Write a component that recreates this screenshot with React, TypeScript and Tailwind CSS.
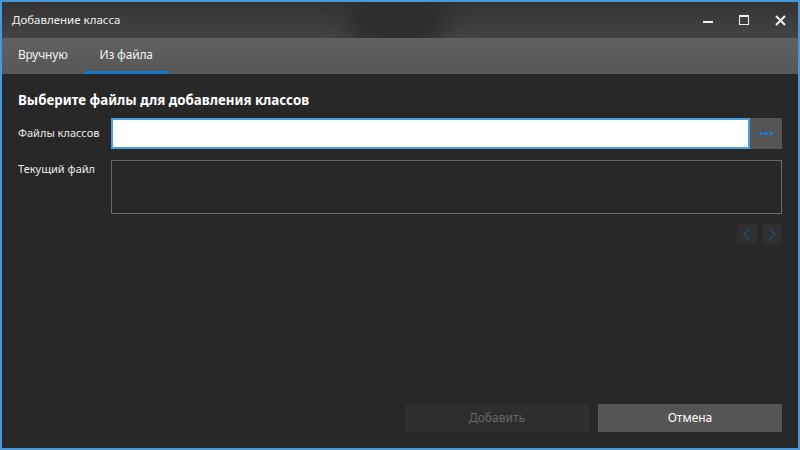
import { useState } from 'react';

export default function App() {
  const [tab, setTab] = useState<'manual' | 'file'>('file');

  return (
    <div
      className="w-[800px] h-[450px] bg-[#4a98d8] p-[2px] overflow-hidden"
      style={{ fontFamily: '"Segoe UI", "Noto Sans", "Open Sans", sans-serif' }}
    >
      <div className="flex flex-col h-full bg-[#282828]">
        {/* title bar */}
        <div className="relative flex items-center h-[36px] shrink-0 bg-gradient-to-b from-[#343434] to-[#444444] overflow-hidden">
          <div className="absolute left-[345px] top-[-10px] w-[100px] h-[56px] rounded-full bg-[#2c2c2c] blur-[12px]" />
          <span className="relative pl-[10px] text-[11.5px] text-[#f0f0f0]">Добавление класса</span>
          <div className="relative ml-auto flex items-center h-full">
            <button className="w-[36px] h-full flex items-center justify-center">
              <svg width="10" height="10" viewBox="0 0 10 10">
                <rect x="0" y="6" width="10" height="2" fill="#f0f0f0" />
              </svg>
            </button>
            <button className="w-[36px] h-full flex items-center justify-center">
              <svg width="10" height="10" viewBox="0 0 10 10">
                <rect x="0.5" y="0.5" width="9" height="9" fill="none" stroke="#f0f0f0" strokeWidth="1" />
                <rect x="0" y="0" width="10" height="2" fill="#f0f0f0" />
              </svg>
            </button>
            <button className="w-[36px] h-full flex items-center justify-center">
              <svg width="11" height="11" viewBox="0 0 11 11">
                <path d="M1 1 L10 10 M10 1 L1 10" stroke="#f0f0f0" strokeWidth="2" />
              </svg>
            </button>
          </div>
        </div>

        {/* tabs */}
        <div className="flex h-[36px] shrink-0 bg-gradient-to-b from-[#616161] to-[#575757] text-[12px] tracking-[-0.2px] text-[#f2f2f2]">
          <button
            onClick={() => setTab('manual')}
            className={`px-[16px] h-full border-b-[3px] ${tab === 'manual' ? 'border-[#1778c8]' : 'border-transparent'}`}
          >
            Вручную
          </button>
          <button
            onClick={() => setTab('file')}
            className={`px-[16px] h-full border-b-[3px] ${tab === 'file' ? 'border-[#1778c8]' : 'border-transparent'}`}
          >
            Из файла
          </button>
        </div>

        {/* content */}
        <div className="flex flex-col flex-1 px-[16px] pt-[16px] pb-[16px]">
          <div className="text-[13.3px] font-bold text-white leading-[20px]">
            Выберите файлы для добавления классов
          </div>

          <div className="flex items-center mt-[8px] h-[31px]">
            <span className="w-[93px] text-[11px] text-[#ececec]">Файлы классов</span>
            <div className="flex-1 h-full bg-white border-2 border-[#4a9ee0]" />
            <button className="w-[32px] h-full bg-[#555555] flex items-center justify-center gap-[1.5px]">
              <span className="w-[3.5px] h-[3.5px] rounded-full bg-[#1a7fd6]" />
              <span className="w-[3.5px] h-[3.5px] rounded-full bg-[#1a7fd6]" />
              <span className="w-[3.5px] h-[3.5px] rounded-full bg-[#1a7fd6]" />
            </button>
          </div>

          <div className="flex mt-[11px] h-[54px]">
            <span className="w-[93px] pt-[1px] text-[11px] text-[#ececec]">Текущий файл</span>
            <div className="flex-1 h-full border border-[#6a6a6a]" />
          </div>

          <div className="flex justify-end gap-[5px] mt-[10px]">
            <button className="w-[20px] h-[20px] bg-[#2f2f2f] flex items-center justify-center">
              <svg width="8" height="14" viewBox="0 0 8 14">
                <path d="M7 1 L1 7 L7 13" fill="none" stroke="#1d4a73" strokeWidth="1.3" />
              </svg>
            </button>
            <button className="w-[20px] h-[20px] bg-[#2f2f2f] flex items-center justify-center">
              <svg width="8" height="14" viewBox="0 0 8 14">
                <path d="M1 1 L7 7 L1 13" fill="none" stroke="#1d4a73" strokeWidth="1.3" />
              </svg>
            </button>
          </div>

          <div className="flex justify-end gap-[9px] mt-auto">
            <button className="w-[184px] h-[28px] bg-[#2e2e2e] text-[12px] text-[#676767]">Добавить</button>
            <button className="w-[184px] h-[28px] bg-[#555555] text-[12px] text-white">Отмена</button>
          </div>
        </div>
      </div>
    </div>
  );
}
